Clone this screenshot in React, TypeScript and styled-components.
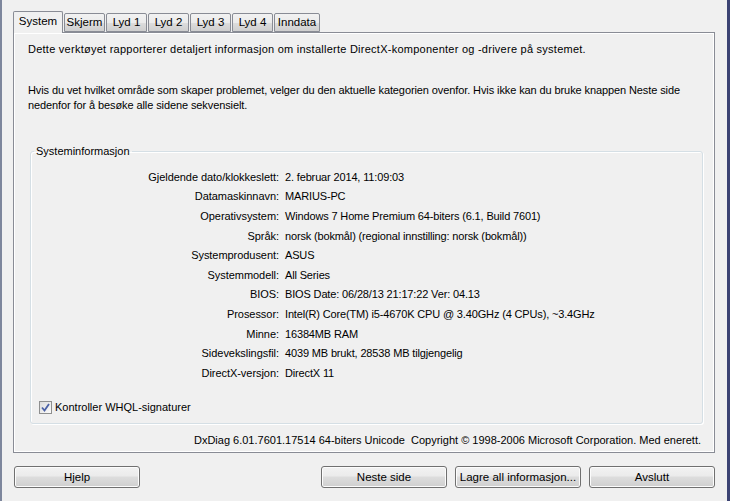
import React from 'react';
import styled, { createGlobalStyle } from 'styled-components';

const GlobalStyle = createGlobalStyle`
  html, body {
    margin: 0;
    padding: 0;
    background: #f0f0f0;
  }
  body {
    font-family: "Liberation Sans", Arial, sans-serif;
    font-size: 11px;
    color: #000;
  }
`;

const Window = styled.div`
  width: 730px;
  height: 501px;
  box-sizing: border-box;
  background: #f0f0f0;
  border-left: 2px solid #7d869c;
  border-right: 3px solid #3c4373;
  padding: 11px 12px 0 11px;
  display: flex;
  flex-direction: column;
`;

const TabStrip = styled.div`
  display: flex;
  align-items: flex-end;
  gap: 1px;
  height: 22px;
  position: relative;
  z-index: 2;
  margin-bottom: -1px;
`;

const Tab = styled.div<{ $active?: boolean; $w: number }>`
  box-sizing: border-box;
  height: ${(p) => (p.$active ? '22px' : '19px')};
  margin-bottom: ${(p) => (p.$active ? '0' : '1px')};
  width: ${(p) => p.$w}px;
  border: 1px solid #898c95;
  border-bottom: ${(p) => (p.$active ? 'none' : '1px solid #898c95')};
  border-radius: 2px 2px 0 0;
  background: ${(p) =>
    p.$active
      ? '#f0f0f0'
      : 'linear-gradient(#f2f2f2 0%, #ebebeb 50%, #dddddd 51%, #cfcfcf 100%)'};
  display: flex;
  justify-content: center;
  padding-top: ${(p) => (p.$active ? '3px' : '2px')};
  line-height: 13px;
  font-size: 11.5px;
`;

const Panel = styled.div`
  box-sizing: border-box;
  height: 421px;
  border: 1px solid #898c95;
  box-shadow: inset 1px 1px 0 #fff, inset -1px -1px 0 #fff;
  padding: 9px 11px 0 13px;
  display: flex;
  flex-direction: column;
`;

const Paragraph = styled.p`
  margin: 0;
  line-height: 15px;
  padding-left: 1px;
  letter-spacing: -0.1px;
`;

const Intro = styled(Paragraph)`
  margin-bottom: 26px;
  letter-spacing: 0.25px;
`;

const GroupBox = styled.fieldset`
  margin: 31px 0 0 3px;
  padding: 0 0 9px 0;
  border: 1px solid #d5dfe5;
  border-radius: 3px;
  box-shadow: inset 1px 1px 0 #fff, 1px 1px 0 #fff;
  height: 280px;
  box-sizing: border-box;
`;

const Legend = styled.legend`
  padding: 0 2px;
  margin-left: 3px;
  line-height: 14px;
`;

const InfoGrid = styled.div`
  display: grid;
  grid-template-columns: 248px 1fr;
  column-gap: 6px;
  grid-auto-rows: 19.6px;
  align-items: center;
  margin-top: 9px;
`;

const Label = styled.div`
  text-align: right;
  white-space: nowrap;
  letter-spacing: -0.05px;
`;

const Value = styled.div`
  white-space: nowrap;
  letter-spacing: -0.15px;
`;

const CheckRow = styled.label`
  display: flex;
  align-items: center;
  gap: 3px;
  margin: 18px 0 0 8px;
`;

const Box = styled.span`
  box-sizing: border-box;
  width: 13px;
  height: 13px;
  border: 1px solid #8e8f8f;
  background: linear-gradient(135deg, #dcdcdc, #fbfbfb);
  display: flex;
  align-items: center;
  justify-content: center;
`;

const Footer = styled.div`
  margin-top: 10px;
  text-align: right;
  padding-right: 2px;
  white-space: nowrap;
`;

const ButtonRow = styled.div`
  display: flex;
  margin-top: 13px;
  padding-left: 1px;
`;

const RightButtons = styled.div`
  display: flex;
  gap: 8px;
  margin-left: auto;
`;

const Button = styled.button`
  box-sizing: border-box;
  width: 126px;
  height: 22px;
  border: 1px solid #707070;
  border-radius: 3px;
  background: linear-gradient(#f2f2f2 0%, #ebebeb 45%, #dddddd 50%, #cfcfcf 100%);
  box-shadow: inset 0 0 0 1px #fcfcfc;
  font-family: "Liberation Sans", Arial, sans-serif;
  font-size: 11.5px;
  color: #000;
  padding: 0;
`;

const tabs: [string, number][] = [
  ['System', 50],
  ['Skjerm', 41],
  ['Lyd 1', 41],
  ['Lyd 2', 41],
  ['Lyd 3', 41],
  ['Lyd 4', 41],
  ['Inndata', 46],
];

const info: [string, string][] = [
  ['Gjeldende dato/klokkeslett:', '2. februar 2014, 11:09:03'],
  ['Datamaskinnavn:', 'MARIUS-PC'],
  ['Operativsystem:', 'Windows 7 Home Premium 64-biters (6.1, Build 7601)'],
  ['Språk:', 'norsk (bokmål) (regional innstilling: norsk (bokmål))'],
  ['Systemprodusent:', 'ASUS'],
  ['Systemmodell:', 'All Series'],
  ['BIOS:', 'BIOS Date: 06/28/13 21:17:22 Ver: 04.13'],
  ['Prosessor:', 'Intel(R) Core(TM) i5-4670K CPU @ 3.40GHz (4 CPUs), ~3.4GHz'],
  ['Minne:', '16384MB RAM'],
  ['Sidevekslingsfil:', '4039 MB brukt, 28538 MB tilgjengelig'],
  ['DirectX-versjon:', 'DirectX 11'],
];

export default function App() {
  return (
    <>
      <GlobalStyle />
      <Window>
        <TabStrip>
          {tabs.map(([name, w], i) => (
            <Tab key={name} $active={i === 0} $w={w}>
              {name}
            </Tab>
          ))}
        </TabStrip>
        <Panel>
          <Intro>
            Dette verktøyet rapporterer detaljert informasjon om installerte DirectX-komponenter og -drivere på systemet.
          </Intro>
          <Paragraph>
            Hvis du vet hvilket område som skaper problemet, velger du den aktuelle kategorien ovenfor. Hvis ikke kan du bruke knappen Neste side nedenfor for å besøke alle sidene sekvensielt.
          </Paragraph>
          <GroupBox>
            <Legend>Systeminformasjon</Legend>
            <InfoGrid>
              {info.map(([k, v]) => (
                <React.Fragment key={k}>
                  <Label>{k}</Label>
                  <Value>{v}</Value>
                </React.Fragment>
              ))}
            </InfoGrid>
            <CheckRow>
              <Box>
                <svg width="9" height="9" viewBox="0 0 9 9">
                  <path d="M1 4.5 L3.5 7.5 L8 1" fill="none" stroke="#4b61a6" strokeWidth="1.8" />
                </svg>
              </Box>
              Kontroller WHQL-signaturer
            </CheckRow>
          </GroupBox>
          <Footer>
            DxDiag 6.01.7601.17514 64-biters Unicode&nbsp; Copyright © 1998-2006 Microsoft Corporation. Med enerett.
          </Footer>
        </Panel>
        <ButtonRow>
          <Button>Hjelp</Button>
          <RightButtons>
            <Button>Neste side</Button>
            <Button>Lagre all informasjon...</Button>
            <Button>Avslutt</Button>
          </RightButtons>
        </ButtonRow>
      </Window>
    </>
  );
}
